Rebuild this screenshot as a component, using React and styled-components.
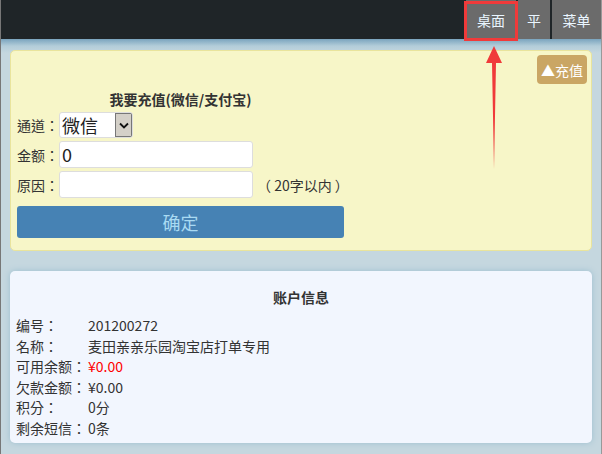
import styled, { createGlobalStyle } from "styled-components"

const Global = createGlobalStyle`
  html, body {
    margin: 0;
    padding: 0;
    background: #c5d7df;
  }
  body {
    font-family: "Noto Sans CJK SC", "Noto Sans", sans-serif;
    font-size: 14px;
    color: #333;
  }
`

// TC glyphs put the full-width colon in the middle of the cell
const centeredPunct = `"Noto Sans CJK TC", "Noto Sans CJK SC", sans-serif`

const Screen = styled.div`
  position: relative;
  width: 602px;
  height: 454px;
  overflow: hidden;
  box-sizing: border-box;
  border-left: 1px solid #777;
  border-right: 1px solid #999;
  background: linear-gradient(#7aa4be 0px, #b3cdd9 7px, #c5d7df 14px) 0 39px / 100% 100% no-repeat, #c5d7df;
`

const TopBar = styled.header`
  height: 39px;
  background: #1f2528;
  display: flex;
  justify-content: flex-end;
`

const NavButton = styled.div`
  width: ${p => p.$w}px;
  height: 39px;
  margin-left: 2px;
  background: #6b6b6b;
  color: #eaf6ff;
  font-size: 14px;
  display: flex;
  align-items: center;
  justify-content: center;
`

const Content = styled.main`
  padding: 11px 9px 0 9px;
  display: flex;
  flex-direction: column;
  gap: 20px;
`

const ChargePanel = styled.section`
  height: 201px;
  box-sizing: border-box;
  background: #f7f6c8;
  border: 1px solid #e9e49c;
  border-radius: 5px;
  padding: 4px 4px 0 6px;
  display: flex;
  flex-direction: column;
`

const PanelTop = styled.div`
  display: flex;
  justify-content: flex-end;
`

const ChargeTag = styled.div`
  height: 29px;
  padding: 0 4px;
  border-radius: 4px;
  background: #caa664;
  color: #fff;
  font-size: 14px;
  display: flex;
  align-items: center;
`

const Form = styled.div`
  width: 327px;
  display: flex;
  flex-direction: column;
  gap: 3px;
`

const FormTitle = styled.h3`
  margin: 5px 0 0;
  font-size: 14px;
  line-height: 20px;
  font-weight: bold;
  text-align: center;
`

const FieldRow = styled.div`
  display: flex;
  align-items: center;
  height: ${p => p.$h || 27}px;
`

const FieldLabel = styled.span`
  width: 42px;
  flex-shrink: 0;
  font-family: ${centeredPunct};
`

const SelectBox = styled.div`
  width: 74px;
  height: 26px;
  box-sizing: border-box;
  background: #fff;
  border: 1px solid #ddd;
  border-radius: 3px;
  display: flex;
  align-items: stretch;
  overflow: hidden;
`

const SelectText = styled.span`
  flex: 1;
  font-size: 18px;
  line-height: 24px;
  padding-left: 2px;
  color: #222;
`

const SelectArrow = styled.span`
  width: 17px;
  background: #d4d0c8;
  border: 1px solid #777;
  box-sizing: border-box;
  display: flex;
  align-items: center;
  justify-content: center;
`

const TextBox = styled.div`
  width: 194px;
  height: 27px;
  flex-shrink: 0;
  box-sizing: border-box;
  background: #fff;
  border: 1px solid #ddd;
  border-radius: 3px;
  font-size: 18px;
  line-height: 25px;
  padding-left: 2px;
  color: #222;
`

const Hint = styled.span`
  margin-left: 4px;
  font-size: 14px;
  white-space: pre;
`

const SubmitButton = styled.div`
  margin-top: 5px;
  height: 32px;
  border-radius: 3px;
  background: #4682b4;
  color: #a9daf2;
  font-size: 18px;
  display: flex;
  align-items: center;
  justify-content: center;
`

const AccountPanel = styled.section`
  height: 172px;
  box-sizing: border-box;
  background: #f2f6fe;
  border-radius: 5px;
  box-shadow: 0 0 6px #9dbfd0;
  padding: 16px 6px 0;
`

const AccountTitle = styled.h3`
  margin: 0 0 8px;
  font-size: 14px;
  line-height: 20px;
  font-weight: bold;
  text-align: center;
`

const InfoRow = styled.div`
  display: flex;
  line-height: 20.6px;
`

const InfoLabel = styled.span`
  width: 72px;
  flex-shrink: 0;
  font-family: ${centeredPunct};
`

const InfoValue = styled.span`
  color: ${p => (p.$red ? "#f00" : "#333")};
`

const Highlight = styled.div`
  position: absolute;
  left: 463px;
  top: 1px;
  width: 54px;
  height: 40px;
  box-sizing: border-box;
  border: 3px solid #f03a3a;
`

const Arrow = styled.svg`
  position: absolute;
  left: 482px;
  top: 46px;
`

const account = [
  ["编号：", "201200272"],
  ["名称：", "麦田亲亲乐园淘宝店打单专用"],
  ["可用余额：", "¥0.00", true],
  ["欠款金额：", "¥0.00"],
  ["积分：", "0分"],
  ["剩余短信：", "0条"],
]

export default function App() {
  return (
    <Screen>
      <Global />
      <TopBar>
        <NavButton $w={50}>桌面</NavButton>
        <NavButton $w={32}>平</NavButton>
        <NavButton $w={49}>菜单</NavButton>
      </TopBar>
      <Content>
        <ChargePanel>
          <PanelTop>
            <ChargeTag>▲充值</ChargeTag>
          </PanelTop>
          <Form>
            <FormTitle>我要充值(微信/支付宝)</FormTitle>
            <FieldRow $h={26}>
              <FieldLabel>通道：</FieldLabel>
              <SelectBox>
                <SelectText>微信</SelectText>
                <SelectArrow>
                  <svg width="10" height="7" viewBox="0 0 10 7">
                    <path d="M1 1.5 L5 5.5 L9 1.5" fill="none" stroke="#111" strokeWidth="1.8" />
                  </svg>
                </SelectArrow>
              </SelectBox>
            </FieldRow>
            <FieldRow>
              <FieldLabel>金额：</FieldLabel>
              <TextBox>0</TextBox>
            </FieldRow>
            <FieldRow>
              <FieldLabel>原因：</FieldLabel>
              <TextBox />
              <Hint>（ 20字以内 ）</Hint>
            </FieldRow>
            <SubmitButton>确定</SubmitButton>
          </Form>
        </ChargePanel>
        <AccountPanel>
          <AccountTitle>账户信息</AccountTitle>
          {account.map(([label, value, red]) => (
            <InfoRow key={label}>
              <InfoLabel>{label}</InfoLabel>
              <InfoValue $red={red}>{value}</InfoValue>
            </InfoRow>
          ))}
        </AccountPanel>
      </Content>
      <Highlight />
      <Arrow width="22" height="124" viewBox="0 0 22 124">
        <path d="M11 0 L19 17 L13 17 L11 123 L9 17 L3 17 Z" fill="#f03a3a" />
      </Arrow>
    </Screen>
  )
}
